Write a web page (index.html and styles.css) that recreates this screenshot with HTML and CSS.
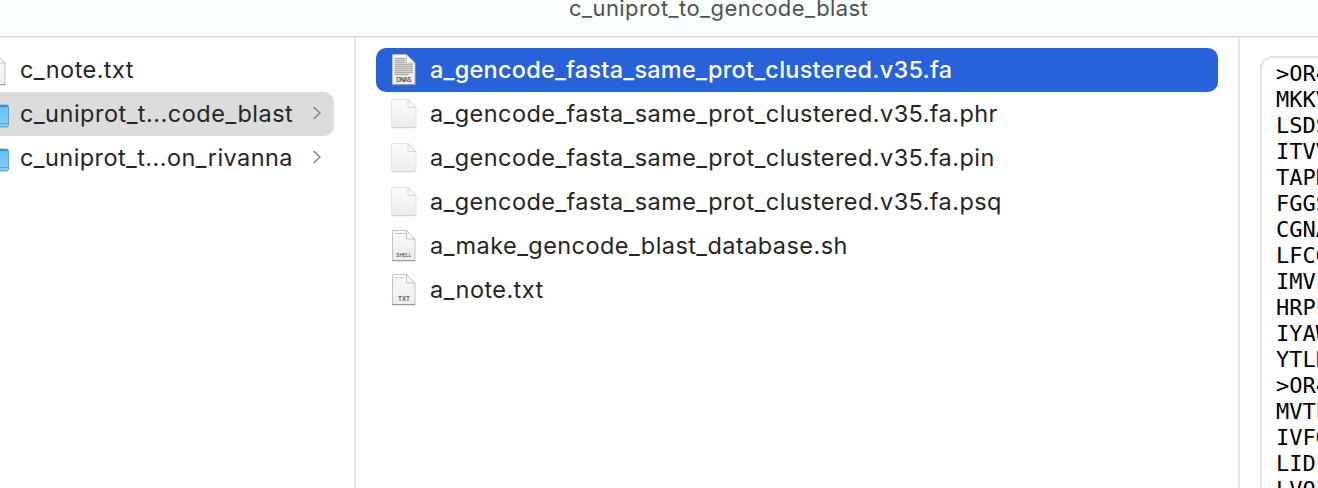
FILE: index.html
```
<!DOCTYPE html>
<html lang="en">
<head>
<meta charset="utf-8">
<title>c_uniprot_to_gencode_blast</title>
<link rel="stylesheet" href="styles.css">
</head>
<body>
<svg width="0" height="0" class="defs" aria-hidden="true">
  <defs>
    <linearGradient id="paper" x1="0" y1="0" x2="0" y2="1"><stop offset="0" stop-color="#fbfbfb"/><stop offset="1" stop-color="#ececec"/></linearGradient>
    <linearGradient id="fold" x1="0" y1="1" x2="1" y2="0"><stop offset="0" stop-color="#ffffff"/><stop offset=".5" stop-color="#f4f4f4"/><stop offset="1" stop-color="#cccccc"/></linearGradient>
    <linearGradient id="blue" x1="0" y1="0" x2="0" y2="1"><stop offset="0" stop-color="#65bdf3"/><stop offset="1" stop-color="#86cefa"/></linearGradient>
    <symbol id="page" viewBox="0 0 28 34">
      <path d="M2.500 2.500h15.500l8 8v18.500a1.500 1.500 0 0 1-1.500 1.500h-21.500a1.500 1.500 0 0 1-1.500-1.500v-25.500a1 1 0 0 1 1-1z" fill="url(#paper)" stroke="#e0e0e0" stroke-width=".8"/>
      <path d="M2.500 30.700h22.500" stroke="#cccccc" stroke-width=".9"/>
      <path d="M18 2.500v7a1 1 0 0 0 1 1h7z" fill="url(#fold)" stroke="#cfcfcf" stroke-width=".8"/>
    </symbol>
    <symbol id="doc" viewBox="0 0 28 34">
      <path d="M2.500 1.500h14l8.500 8.500v21.500h-22.500z" fill="url(#paper)" stroke="#bdbdbd" stroke-width=".9"/>
      <path d="M2 31.700h23.500" stroke="#929292" stroke-width="1"/>
      <path d="M16.500 1.500v8.500h8.500z" fill="url(#fold)" stroke="#b8b8b8" stroke-width=".8"/>
    </symbol>
    <symbol id="folder" viewBox="0 0 32 26">
      <path d="M0 2h29.500q2 0 2 2v18q0 2-2 2h-29.500z" fill="url(#blue)" stroke="#4a8fbd" stroke-width=".8"/>
      <path d="M0 2.500h30q1 .3 1 1.500h-31z" fill="#3189c8"/>
      <path d="M0 20.500h31" stroke="#55a5d9" stroke-width="1"/>
    </symbol>
  </defs>
</svg>
<div class="window">
  <header class="titlebar"><span class="title">c_uniprot_to_gencode_blast</span></header>
  <main class="columns">
    <section class="parent">
      <div class="entry"><svg class="cut-doc"><use href="#doc" width="28" height="34"/></svg><span class="name">c_note.txt</span></div>
      <div class="entry current"><svg class="cut-folder"><use href="#folder" width="32" height="26"/></svg><span class="name n-blast">c_uniprot_t...code_blast</span><svg class="chevron" viewBox="0 0 10 14"><path d="M2 1.500l6 5.500-6 5.500"/></svg></div>
      <div class="entry"><svg class="cut-folder"><use href="#folder" width="32" height="26"/></svg><span class="name">c_uniprot_t...on_rivanna</span><svg class="chevron" viewBox="0 0 10 14"><path d="M2 1.500l6 5.500-6 5.500"/></svg></div>
    </section>
    <section class="files">
      <div class="file selected"><svg class="icon" viewBox="0 0 28 34"><use href="#doc"/><path d="M4.500 5.500h11M4.500 7.500h11M4.500 9.500h11M4.500 11.500h18.500M4.500 13.500h18.500M4.500 15.500h18.500M4.500 17.500h18.500M4.500 19.500h18.500M4.500 21.500h14" stroke="#b0b0b0" stroke-width="1.400"/><text x="13.800" y="28.500" textLength="15" class="kind">DNAS</text></svg><span class="name n-fa">a_gencode_fasta_same_prot_clustered.v35.fa</span></div>
      <div class="file"><svg class="icon" viewBox="0 0 28 34"><use href="#page"/></svg><span class="name">a_gencode_fasta_same_prot_clustered.v35.fa.phr</span></div>
      <div class="file"><svg class="icon" viewBox="0 0 28 34"><use href="#page"/></svg><span class="name">a_gencode_fasta_same_prot_clustered.v35.fa.pin</span></div>
      <div class="file"><svg class="icon" viewBox="0 0 28 34"><use href="#page"/></svg><span class="name">a_gencode_fasta_same_prot_clustered.v35.fa.psq</span></div>
      <div class="file"><svg class="icon" viewBox="0 0 28 34"><use href="#doc"/><path d="M5 4.500h11" stroke="#b5b5b5" stroke-dasharray="2 .6"/><text x="13.800" y="28" textLength="15" class="kind small">SHELL</text></svg><span class="name">a_make_gencode_blast_database.sh</span></div>
      <div class="file"><svg class="icon" viewBox="0 0 28 34"><use href="#doc"/><path d="M5 4.500h9" stroke="#c5c5c5" stroke-dasharray="2 .6"/><text x="14" y="28" textLength="12" class="kind">TXT</text></svg><span class="name">a_note.txt</span></div>
    </section>
    <section class="preview"><pre class="sequence">&gt;OR4F
MKKVT
LSDSQ
ITVVS
TAPKM
FGGSE
CGNAC
LFCGP
IMVIA
HRPLD
IYAWP
YTLRN
&gt;OR4F
MVTEF
IVFGN
LIDLS
LVQIF</pre></section>
  </main>
</div>
</body>
</html>
```
FILE: styles.css
```
* { box-sizing: border-box; }
body { margin: 0; background: #fff; overflow: hidden; font-family: Inter, "Liberation Sans", sans-serif; color: #252525; }
.defs { position: absolute; }
.window { display: flex; flex-direction: column; width: 1318px; height: 488px; overflow: hidden; }
.titlebar { flex: none; height: 38px; background: #f9fdfe; border-bottom: 1px solid #efefef; box-shadow: inset 0 -1px #d8d9d9; padding-left: 569px; }
.title { display: block; margin-top: -7px; font-size: 22px; line-height: 30px; color: #505252; white-space: nowrap; letter-spacing: .43px; }
.columns { flex: 1; min-height: 0; display: grid; grid-template-columns: 356px 884px 78px; overflow: hidden; }
.parent { border-right: 2px solid #e4e4e4; padding: 10px 20px 0 0; }
.entry { display: flex; align-items: center; height: 44px; }
.current { background: #dcdcdc; border-radius: 0 10px 10px 0; }
.cut-doc, .cut-folder { flex: none; width: 10px; margin-right: 10px; overflow: hidden; }
.cut-doc { height: 34px; margin-top: -1px; }
.cut-doc use { transform: translateX(-20px); }
.cut-folder { height: 26px; margin-top: 3px; }
.cut-folder use { transform: translateX(-23px); }
.chevron { width: 10px; height: 14px; margin: -2px 12px 0 auto; fill: none; stroke: #858585; stroke-width: 1.6; stroke-linecap: round; stroke-linejoin: round; }
.files { border-right: 2px solid #e4e4e4; padding: 10px 20px 0; }
.file { display: flex; align-items: center; height: 44px; padding-left: 14px; }
.selected { background: #2762da; color: #fff; border-radius: 10px; font-weight: 500; }
.icon { flex: none; width: 28px; height: 34px; margin: -1px 12px 0 0; }
.kind { font: 500 6px Inter, sans-serif; text-anchor: middle; fill: #333; }
.small { font-size: 4.5px; }
.name { font-size: 23.5px; line-height: 30px; white-space: nowrap; letter-spacing: .43px; }
.n-fa { letter-spacing: .24px; }
.n-blast { letter-spacing: .49px; }
.preview { padding: 18px 0 0 20px; overflow: hidden; }
.sequence { margin: 0; width: 120px; height: 460px; padding: 3px 0 0 14px; border: 2px solid #e4e4e4; border-radius: 12px 0 0 0; font: 22px/26px "DejaVu Sans Mono", monospace; color: #000; }
```
